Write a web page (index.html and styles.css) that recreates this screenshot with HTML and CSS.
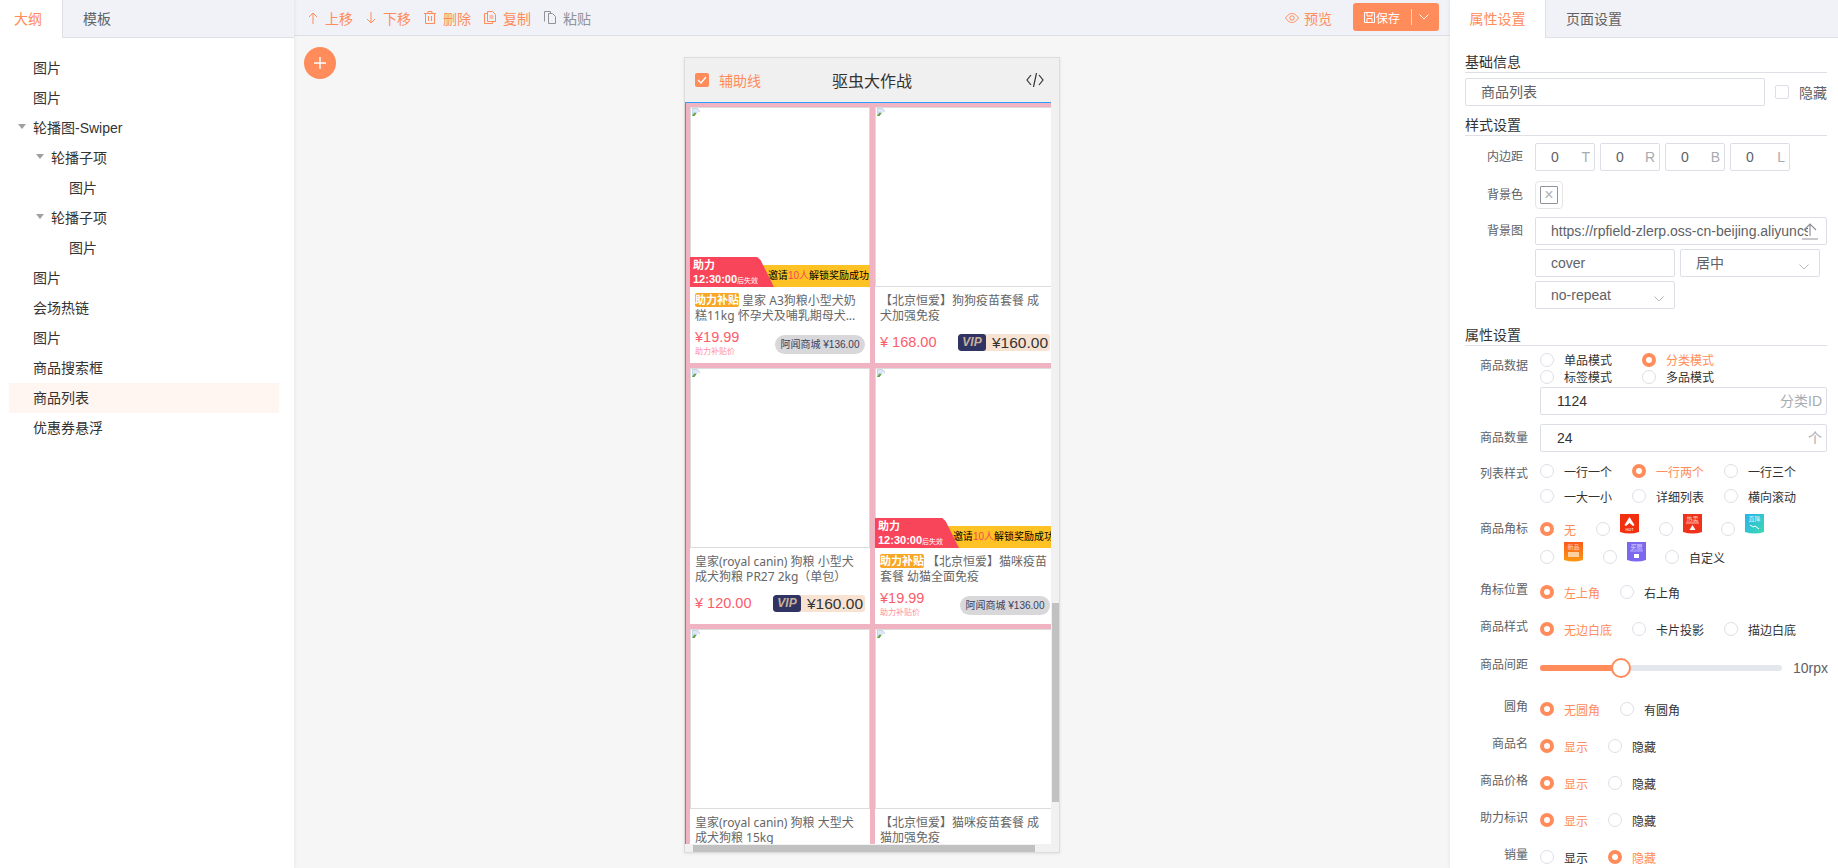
FILE: index.html
```html
<!DOCTYPE html>
<html lang="zh-CN">
<head>
    <meta charset="UTF-8">
    <title>页面编辑</title>
    <link rel="stylesheet" href="styles.css">
</head>
<body>
<svg class="defs" width="0" height="0">
    <symbol id="broken" viewBox="0 0 9 9">
        <path d="M0 0h6l3 3v6H0z" fill="#c7d3e6"/>
        <path d="M1 1h4.500l2.500 2.500V5H1z" fill="#dce8f8"/>
        <path d="M0 9l3-4 2 1-2 3z" fill="#5fa83a"/>
        <path d="M3 9l4-5 2 1v4z" fill="#fff"/>
    </symbol>
    <symbol id="caret" viewBox="0 0 8 5"><path d="M0 0h8L4 5z" fill="#a0a0a0"/></symbol>
    <symbol id="chev" viewBox="0 0 10 6"><path d="M.5.500 5 5 9.500.500" fill="none" stroke="#b4b8c0"/></symbol>
</svg>

<div class="app">
    <aside class="outline">
        <div class="tabs">
            <div class="tab active small">大纲</div>
            <div class="tab small-off">模板</div>
        </div>
        <ul class="tree">
            <li class="node">图片</li>
            <li class="node">图片</li>
            <li class="node"><svg class="caret"><use href="#caret"/></svg>轮播图-Swiper</li>
            <li class="node lv1"><svg class="caret"><use href="#caret"/></svg>轮播子项</li>
            <li class="node lv2">图片</li>
            <li class="node lv1"><svg class="caret"><use href="#caret"/></svg>轮播子项</li>
            <li class="node lv2">图片</li>
            <li class="node">图片</li>
            <li class="node">会场热链</li>
            <li class="node">图片</li>
            <li class="node">商品搜索框</li>
            <li class="node current">商品列表</li>
            <li class="node">优惠券悬浮</li>
        </ul>
    </aside>

    <main class="stage">
        <div class="toolbar">
            <div class="tools">
                <span class="tool">
                    <svg width="10" height="12" viewBox="0 0 10 12"><path d="M5 12V1M1 5l4-4 4 4" fill="none" stroke="currentColor"/></svg>上移
                </span>
                <span class="tool">
                    <svg width="10" height="12" viewBox="0 0 10 12"><path d="M5 0v11M1 7l4 4 4-4" fill="none" stroke="currentColor"/></svg>下移
                </span>
                <span class="tool">
                    <svg width="12" height="13" viewBox="0 0 12 13"><path d="M0 2.500h12M4 2.500V.5h4v2M1.500 2.500v10h9v-10M4.500 5v5M7.500 5v5" fill="none" stroke="currentColor"/></svg>删除
                </span>
                <span class="tool">
                    <svg width="12" height="13" viewBox="0 0 12 13"><path d="M3.500.5h5l3 3v7h-8zM3.500 2.500h-3v10h8v-2M5.500 5h4M5.500 7h4" fill="none" stroke="currentColor"/></svg>复制
                </span>
                <span class="tool off">
                    <svg width="12" height="13" viewBox="0 0 12 13"><path d="M.5 10.500V.5h6v2M4.500 2.500h4l3 3v7h-7z" fill="none" stroke="currentColor"/></svg>粘贴
                </span>
            </div>
            <div class="actions">
                <span class="tool">
                    <svg width="14" height="10" viewBox="0 0 14 10"><path d="M.5 5C3 1.500 5 .5 7 .5s4 1 6.500 4.500C11 8.500 9 9.500 7 9.500S3 8.500.5 5z" fill="none" stroke="currentColor"/><circle cx="7" cy="5" r="2.200" fill="none" stroke="currentColor"/></svg>预览
                </span>
                <div class="save">
                    <svg width="11" height="11" viewBox="0 0 11 11"><path d="M.5.500h10v10H.5zM3 .5v3.500h5V.5M3 10.500V6.500h5v4" fill="none" stroke="#fff"/></svg>
                    <span>保存</span>
                    <i class="save-line"></i>
                    <svg width="10" height="6" viewBox="0 0 10 6"><path d="M.5.500 5 5 9.500.500" fill="none" stroke="#fff"/></svg>
                </div>
            </div>
        </div>

        <div class="canvas">
            <div class="add-btn">
                <svg width="12" height="12" viewBox="0 0 12 12"><path d="M6 0v12M0 6h12" stroke="#fff" stroke-width="1.400"/></svg>
            </div>

            <div class="phone">
                <div class="phone-head">
                    <div class="guide"><i class="check-on"><svg width="10" height="8" viewBox="0 0 10 8"><path d="M1 4l3 3 5-6" fill="none" stroke="#fff" stroke-width="1.300"/></svg></i>辅助线</div>
                    <div class="phone-title">驱虫大作战</div>
                    <svg class="code-icon" width="18" height="14" viewBox="0 0 18 14"><path d="M5 2 1 7l4 5M13 2l4 5-4 5M10.500 0 7.500 14" fill="none" stroke="#333" stroke-width="1.200"/></svg>
                </div>
                <div class="phone-body">
                    <div class="goods-grid">
                        <div class="card">
                            <div class="pic">
                                <svg class="broken"><use href="#broken"/></svg>
                                <div class="assist">
                                    <div class="assist-bar">邀请<em>10人</em>解锁奖励成功</div>
                                    <div class="assist-tag"><b>助力</b><b>12:30:00<small>后失效</small></b></div>
                                </div>
                            </div>
                            <div class="name"><span class="sub-tag">助力补贴</span> 皇家 A3狗粮小型犬奶糕11kg 怀孕犬及哺乳期母犬...</div>
                            <div class="bottom">
                                <div class="price-box"><div class="price">¥19.99</div><div class="price-note">助力补贴价</div></div>
                                <div class="shop-pill">阿闻商城 ¥136.00</div>
                            </div>
                        </div>
                        <div class="card">
                            <div class="pic"><svg class="broken"><use href="#broken"/></svg></div>
                            <div class="name">【北京恒爱】狗狗疫苗套餐 成犬加强免疫</div>
                            <div class="bottom plain">
                                <div class="price">¥ 168.00</div>
                                <div class="vip"><i>VIP</i><span>¥160.00</span></div>
                            </div>
                        </div>
                        <div class="card">
                            <div class="pic"><svg class="broken"><use href="#broken"/></svg></div>
                            <div class="name">皇家(royal canin) 狗粮 小型犬成犬狗粮 PR27 2kg（单包）</div>
                            <div class="bottom plain">
                                <div class="price">¥ 120.00</div>
                                <div class="vip"><i>VIP</i><span>¥160.00</span></div>
                            </div>
                        </div>
                        <div class="card">
                            <div class="pic">
                                <svg class="broken"><use href="#broken"/></svg>
                                <div class="assist">
                                    <div class="assist-bar">邀请<em>10人</em>解锁奖励成功</div>
                                    <div class="assist-tag"><b>助力</b><b>12:30:00<small>后失效</small></b></div>
                                </div>
                            </div>
                            <div class="name"><span class="sub-tag">助力补贴</span> 【北京恒爱】猫咪疫苗套餐 幼猫全面免疫</div>
                            <div class="bottom">
                                <div class="price-box"><div class="price">¥19.99</div><div class="price-note">助力补贴价</div></div>
                                <div class="shop-pill">阿闻商城 ¥136.00</div>
                            </div>
                        </div>
                        <div class="card">
                            <div class="pic"><svg class="broken"><use href="#broken"/></svg></div>
                            <div class="name">皇家(royal canin) 狗粮 大型犬成犬狗粮 15kg</div>
                        </div>
                        <div class="card">
                            <div class="pic"><svg class="broken"><use href="#broken"/></svg></div>
                            <div class="name">【北京恒爱】猫咪疫苗套餐 成猫加强免疫</div>
                        </div>
                    </div>
                    <div class="bar-v"><i></i></div>
                    <div class="bar-h"><i></i></div>
                </div>
            </div>
        </div>
    </main>

    <aside class="props">
        <div class="tabs">
            <div class="tab active wide">属性设置</div>
            <div class="tab wide-off">页面设置</div>
        </div>
        <div class="form">
            <div class="sec-title first">基础信息</div>
            <div class="name-row">
                <div class="field name-field">商品列表</div>
                <i class="check-off"></i><span class="hide-text">隐藏</span>
            </div>

            <div class="sec-title mt10">样式设置</div>
            <div class="row pad-row">
                <label>内边距</label>
                <div class="field pad"><span>0</span><u>T</u></div>
                <div class="field pad"><span>0</span><u>R</u></div>
                <div class="field pad"><span>0</span><u>B</u></div>
                <div class="field pad"><span>0</span><u>L</u></div>
            </div>
            <div class="row color-row">
                <label>背景色</label>
                <div class="color-box"><i>×</i></div>
            </div>
            <div class="row image-row">
                <label>背景图</label>
                <div class="field url">
                    <span>https://rpfield-zlerp.oss-cn-beijing.aliyuncs.com/</span>
                    <svg width="18" height="18" viewBox="0 0 18 18"><path d="M1 17h16M9 14V2M3 8l6-6 6 6" fill="none" stroke="#909399" stroke-width="1.200"/></svg>
                </div>
            </div>
            <div class="row sel-row">
                <div class="field sel">cover</div>
                <div class="field sel">居中<svg class="chev"><use href="#chev"/></svg></div>
            </div>
            <div class="row sel-row">
                <div class="field sel">no-repeat<svg class="chev"><use href="#chev"/></svg></div>
            </div>

            <div class="sec-title mt17">属性设置</div>
            <div class="row opts data-row">
                <label>商品数据</label>
                <div class="radios tight">
                    <div class="line">
                        <span class="radio w102">单品模式</span>
                        <span class="radio on">分类模式</span>
                    </div>
                    <div class="line">
                        <span class="radio w102">标签模式</span>
                        <span class="radio">多品模式</span>
                    </div>
                </div>
            </div>
            <div class="row input-row id-row">
                <div class="field wide-input"><span>1124</span><u>分类ID</u></div>
            </div>
            <div class="row input-row count-row">
                <label>商品数量</label>
                <div class="field wide-input"><span>24</span><u>个</u></div>
            </div>
            <div class="row opts list-row">
                <label>列表样式</label>
                <div class="radios">
                    <div class="line"><span class="radio w92">一行一个</span><span class="radio w92 on">一行两个</span><span class="radio">一行三个</span></div>
                    <div class="line"><span class="radio w92">一大一小</span><span class="radio w92">详细列表</span><span class="radio">横向滚动</span></div>
                </div>
            </div>
            <div class="row opts corner-row">
                <label>商品角标</label>
                <div class="radios">
                    <div class="line tall">
                        <span class="radio on w56">无</span>
                        <span class="radio w63"><svg class="corner" viewBox="0 0 19 20"><path d="M0 0h19v18q-9.500 3-19 0z" fill="#f2300f"/><path d="M9.500 3l5 8-1.500 1-3.500-3-3.500 3-1.500-1z" fill="#fff"/><text x="9.500" y="17" font-size="4" fill="#fff" text-anchor="middle">HOT</text></svg></span>
                        <span class="radio w62"><svg class="corner" viewBox="0 0 19 20"><path d="M0 0h19v18q-9.500 3-19 0z" fill="#f0321a"/><text x="9.500" y="7" font-size="6" fill="#fbd0c0" text-anchor="middle">热卖</text><path d="M3 9h13" stroke="#fbb"/><path d="M9.500 11l3 5h-6z" fill="#fff"/></svg></span>
                        <span class="radio"><svg class="corner" viewBox="0 0 19 20"><defs><linearGradient id="gz" x1="0" y1="0" x2="1" y2="1"><stop offset="0" stop-color="#25b4f0"/><stop offset="1" stop-color="#3fd8b0"/></linearGradient></defs><path d="M0 0h19v18q-9.500 3-19 0z" fill="url(#gz)"/><text x="9.500" y="7" font-size="6" fill="#d8f4ff" text-anchor="middle">直降</text><path d="M5 11l3 2 2-1 4 3" fill="none" stroke="#fff"/></svg></span>
                    </div>
                    <div class="line tall">
                        <span class="radio w63"><svg class="corner" viewBox="0 0 19 20"><defs><linearGradient id="gx" x1="0" y1="0" x2="0" y2="1"><stop offset="0" stop-color="#fa5a1e"/><stop offset="1" stop-color="#fb9a12"/></linearGradient></defs><path d="M0 0h19v18q-9.500 3-19 0z" fill="url(#gx)"/><text x="9.500" y="7" font-size="6" fill="#ffd8c0" text-anchor="middle">新品</text><rect x="4" y="10" width="11" height="5" fill="#ffd0a0"/></svg></span>
                        <span class="radio w62"><svg class="corner" viewBox="0 0 19 20"><path d="M0 0h19v18q-9.500 3-19 0z" fill="#7b68ee"/><text x="9.500" y="7" font-size="6" fill="#dcd8ff" text-anchor="middle">买赠</text><path d="M3 9h13" stroke="#b8b0ff"/><rect x="7" y="12" width="5" height="4" fill="#fff"/></svg></span>
                        <span class="radio">自定义</span>
                    </div>
                </div>
            </div>
            <div class="row opts pos-row">
                <label>角标位置</label>
                <div class="radios"><div class="line"><span class="radio on w80">左上角</span><span class="radio">右上角</span></div></div>
            </div>
            <div class="row opts mt13">
                <label>商品样式</label>
                <div class="radios"><div class="line"><span class="radio w92 on">无边白底</span><span class="radio w92">卡片投影</span><span class="radio">描边白底</span></div></div>
            </div>
            <div class="row opts slider-row">
                <label>商品间距</label>
                <div class="slider"><div class="slider-track"><div class="slider-fill"></div><div class="slider-dot"></div></div></div>
                <span class="slider-val">10rpx</span>
            </div>
            <div class="row opts mt17">
                <label>圆角</label>
                <div class="radios"><div class="line"><span class="radio on w80">无圆角</span><span class="radio">有圆角</span></div></div>
            </div>
            <div class="row opts mt13">
                <label>商品名</label>
                <div class="radios"><div class="line"><span class="radio on w68">显示</span><span class="radio">隐藏</span></div></div>
            </div>
            <div class="row opts mt13">
                <label>商品价格</label>
                <div class="radios"><div class="line"><span class="radio on w68">显示</span><span class="radio">隐藏</span></div></div>
            </div>
            <div class="row opts mt13">
                <label>助力标识</label>
                <div class="radios"><div class="line"><span class="radio on w68">显示</span><span class="radio">隐藏</span></div></div>
            </div>
            <div class="row opts mt13">
                <label>销量</label>
                <div class="radios"><div class="line"><span class="radio w68">显示</span><span class="radio on">隐藏</span></div></div>
            </div>
        </div>
    </aside>
</div>
</body>
</html>
```

FILE: styles.css
```css
*, *::before {
    box-sizing: border-box;
}
html, body {
    margin: 0;
    padding: 0;
    height: 868px;
    overflow: hidden;
}
body {
    font-family: "Liberation Sans", "Noto Sans CJK SC", sans-serif;
    font-size: 14px;
    color: #333;
    background: #f6f6f6;
}
.defs {
    position: absolute;
}
.app {
    display: flex;
    height: 868px;
}

/* left panel */
.outline {
    width: 294px;
    flex: none;
    background: #fff;
    box-shadow: 1px 0 3px rgba(0, 0, 0, 0.06);
    z-index: 2;
}
.tabs {
    display: flex;
    height: 38px;
    background: #f1f2f7;
    border-bottom: 1px solid #dfe0e6;
}
.tab {
    height: 37px;
    line-height: 38px;
    color: #606266;
}
.tab.active {
    background: #fff;
    color: #ff8c5a;
    height: 38px;
}
.small {
    width: 63px;
    padding-left: 14px;
    border-right: 1px solid #dfe0e6;
}
.small-off {
    padding-left: 20px;
}
.tree {
    list-style: none;
    margin: 0;
    padding: 15px 15px 0 9px;
}
.node {
    position: relative;
    height: 30px;
    line-height: 31px;
    padding-left: 24px;
    color: #333;
}
.node.lv1 {
    padding-left: 42px;
}
.node.lv2 {
    padding-left: 60px;
}
.node.current {
    background: #fff6f2;
}
.caret {
    position: absolute;
    width: 8px;
    height: 5px;
    left: 9px;
    top: 11px;
}
.lv1 .caret {
    left: 27px;
}

/* middle */
.stage {
    flex: 1;
    min-width: 0;
    display: flex;
    flex-direction: column;
}
.toolbar {
    height: 36px;
    flex: none;
    display: flex;
    justify-content: space-between;
    background: #f1f2f7;
    border-bottom: 1px solid #dfe0e6;
    padding: 0 11px 0 14px;
}
.tools, .actions {
    display: flex;
    align-items: center;
}
.tool {
    display: flex;
    align-items: center;
    gap: 7px;
    color: #ff8c5a;
    margin-right: 13px;
    font-size: 14px;
}
.tool.off {
    color: #909399;
}
.actions .tool {
    gap: 5px;
    margin-right: 21px;
}
.save {
    width: 86px;
    height: 28px;
    margin-top: -1px;
    background: #ff8c5a;
    border-radius: 3px;
    color: #fff;
    font-size: 12px;
    display: flex;
    align-items: center;
    padding-left: 11px;
}
.save span {
    margin-left: 1px;
}
.save-line {
    width: 1px;
    height: 16px;
    margin: 0 7px 0 11px;
    background: rgba(255, 255, 255, 0.6);
}
.canvas {
    position: relative;
    flex: 1;
    min-height: 0;
    padding-top: 21px;
}
.add-btn {
    position: absolute;
    left: 10px;
    top: 11px;
    width: 32px;
    height: 32px;
    border-radius: 50%;
    background: #ff8c5a;
    display: flex;
    align-items: center;
    justify-content: center;
}
.phone {
    width: 376px;
    height: 796px;
    margin: 0 auto;
    background: #f0f0f0;
    border: 1px solid #dcdcdc;
    box-shadow: 0 1px 3px rgba(0, 0, 0, 0.08);
    display: flex;
    flex-direction: column;
}
.phone-head {
    height: 44px;
    flex: none;
    display: grid;
    grid-template-columns: 1fr auto 1fr;
    align-items: center;
    padding: 0 15px 0 10px;
}
.guide {
    display: flex;
    align-items: center;
    gap: 10px;
    color: #ff8c5a;
}
.check-on {
    width: 14px;
    height: 14px;
    border-radius: 2px;
    background: #ff8c5a;
    display: flex;
    align-items: center;
    justify-content: center;
}
.phone-title {
    font-size: 16px;
    margin-left: 5px;
    color: #333;
}
.code-icon {
    justify-self: end;
}
.phone-body {
    position: relative;
    flex: 1;
    min-height: 0;
    overflow: hidden;
    background: #f0f0f0;
}
.goods-grid {
    width: 366px;
    height: 742px;
    overflow: hidden;
    display: grid;
    grid-template-columns: 180px 180px;
    grid-auto-rows: 256px;
    gap: 5px;
    padding: 4px 0 0 4px;
    background: #f0b3c2;
    border-top: 1px solid #2e9bff;
    border-left: 1px solid #2e9bff;
}
.card {
    background: #fff;
    position: relative;
    width: 180px;
}
.pic {
    position: relative;
    height: 180px;
    border: 1px solid #dcdcdc;
    background: #fff;
}
.broken {
    position: absolute;
    left: 1px;
    top: 0;
    width: 8px;
    height: 8px;
}
.assist {
    position: absolute;
    left: -1px;
    right: -1px;
    bottom: -1px;
    height: 30px;
}
.assist-bar {
    position: absolute;
    left: 60px;
    right: 0;
    bottom: 0;
    height: 22px;
    line-height: 22px;
    background: #fec225;
    color: #000;
    font-size: 10px;
    text-align: right;
    white-space: nowrap;
    padding-right: 1px;
    overflow: hidden;
}
.assist-bar em {
    font-style: normal;
    color: #f9455a;
}
.assist-tag {
    position: absolute;
    left: 0;
    top: 0;
    width: 84px;
    height: 30px;
    background: #f9455a;
    clip-path: polygon(0 0, 80% 0, 84% 10%, 100% 100%, 0 100%);
    color: #fff;
    padding: 1px 0 0 3px;
    font-size: 11px;
    line-height: 14px;
}
.assist-tag b {
    display: block;
    white-space: nowrap;
}
.assist-tag small {
    font-size: 7px;
    font-weight: normal;
}
.name {
    margin: 6px 5px 0;
    height: 30px;
    font-family: "Noto Sans", "Noto Sans CJK SC", sans-serif;
    font-size: 12px;
    line-height: 15px;
    color: #666;
    overflow: hidden;
}
.sub-tag {
    display: inline-block;
    background: #f8a623;
    color: #fff;
    font-size: 11px;
    font-weight: bold;
    height: 14px;
    line-height: 14px;
    width: 44px;
    text-align: center;
    border-radius: 2px;
    vertical-align: top;
}
.bottom {
    margin: 6px 5px 0;
    display: flex;
    justify-content: space-between;
    align-items: flex-start;
}
.bottom.plain {
    margin-top: 11px;
    align-items: center;
}
.price {
    color: #fa5c6b;
    font-size: 14.500px;
    line-height: 17px;
}
.price-note {
    color: #ff8fa0;
    font-size: 8px;
    line-height: 10px;
    margin-top: 1px;
}
.shop-pill {
    margin-top: 6px;
    height: 19px;
    line-height: 19px;
    width: 90px;
    text-align: center;
    border-radius: 10px;
    background: #d8d8da;
    color: #3a4060;
    font-size: 10px;
    white-space: nowrap;
}
.vip {
    display: flex;
    width: 92px;
    height: 17px;
    background: #f8e3d3;
    border-radius: 3px;
    overflow: hidden;
    font-size: 15.500px;
    line-height: 17px;
    color: #333;
}
.vip i {
    width: 28px;
    flex: none;
    background: #2f3463;
    color: #c9b09a;
    font-weight: bold;
    font-size: 12px;
    text-align: center;
    border-radius: 3px;
}
.vip span {
    flex: 1;
    text-align: right;
    padding-right: 2px;
    white-space: nowrap;
}
.bar-v {
    position: absolute;
    right: 0;
    top: 0;
    bottom: 8px;
    width: 8px;
    background: #f1f1f1;
}
.bar-v i {
    position: absolute;
    left: 1px;
    right: 0;
    top: 501px;
    height: 199px;
    background: #c1c1c1;
}
.bar-h {
    position: absolute;
    left: 0;
    right: 0;
    bottom: 0;
    height: 8px;
    background: #f1f1f1;
}
.bar-h i {
    position: absolute;
    left: 8px;
    top: 1px;
    width: 342px;
    height: 7px;
    background: #c1c1c1;
}

/* right panel */
.props {
    width: 388px;
    flex: none;
    background: #fff;
    box-shadow: -1px 0 3px rgba(0, 0, 0, 0.06);
    z-index: 2;
    overflow: hidden;
}
.wide {
    width: 96px;
    text-align: center;
    border-right: 1px solid #dfe0e6;
}
.wide-off {
    padding-left: 20px;
}
.form {
    padding: 0 11px 0 15px;
}
.sec-title {
    height: 20px;
    line-height: 19px;
    border-bottom: 1px solid #dfe0e6;
    color: #333;
}
.sec-title.first {
    margin-top: 15px;
}
.name-row {
    display: flex;
    align-items: center;
    margin-top: 5px;
    height: 28px;
}
.field {
    height: 28px;
    line-height: 26px;
    border: 1px solid #dcdfe6;
    border-radius: 2px;
    background: #fff;
    color: #606266;
}
.name-field {
    width: 300px;
    padding-left: 15px;
    color: #606266;
}
.check-off {
    width: 14px;
    height: 14px;
    border: 1px solid #dcdfe6;
    border-radius: 2px;
    margin-left: 10px;
}
.hide-text {
    margin-left: 10px;
    color: #606266;
}
.row {
    display: flex;
    margin-top: 8px;
}
.row label {
    width: 58px;
    flex: none;
    margin-right: 12px;
    text-align: right;
    font-size: 12px;
    color: #606266;
    line-height: 28px;
}
.pad-row {
    margin-top: 7px;
    gap: 5px;
}
.pad-row label {
    margin-right: 7px;
}
.pad {
    width: 60px;
    display: flex;
    justify-content: space-between;
    padding: 0 4px 0 15px;
}
.field u {
    text-decoration: none;
    color: #a8abb2;
}
.color-row {
    margin-top: 10px;
}
.color-box {
    width: 28px;
    height: 28px;
    border: 1px solid #e6e6e6;
    border-radius: 4px;
    padding: 4px;
}
.color-box i {
    display: block;
    width: 18px;
    height: 18px;
    border: 1px solid #909399;
    border-radius: 1px;
    text-align: center;
    font-style: normal;
    font-size: 16px;
    line-height: 15px;
    color: #b0b3b8;
}
.url {
    flex: 1;
    position: relative;
    padding-left: 15px;
    overflow: hidden;
    white-space: nowrap;
}
.url span {
    display: block;
    width: 257px;
    overflow: hidden;
}
.url svg {
    position: absolute;
    right: 7px;
    top: 4px;
}
.sel-row {
    margin-top: 4px;
    padding-left: 70px;
    gap: 5px;
}
.sel {
    position: relative;
    width: 140px;
    padding-left: 15px;
}
.chev {
    position: absolute;
    right: 10px;
    top: 14px;
    width: 10px;
    height: 6px;
}
.opts label {
    width: 63px;
    line-height: 14px;
    padding-top: 3px;
}
.radios {
    flex: 1;
    min-width: 0;
}
.line {
    display: flex;
    align-items: center;
    height: 24px;
    font-size: 12px;
}
.radios.tight .line {
    height: 17px;
}
.data-row {
    margin-top: 5px;
}
.opts.data-row label {
    padding-top: 8px;
}
.list-row {
    margin-top: 7px;
}
.opts.list-row label {
    padding-top: 8px;
}
.list-row .line + .line {
    margin-top: 1px;
}
.line.tall {
    height: 28px;
}
.corner-row {
    margin-top: 7px;
}
.opts.corner-row label {
    padding-top: 7px;
}
.pos-row {
    margin-top: 9px;
}
.radio {
    display: flex;
    align-items: center;
    color: #333;
    white-space: nowrap;
}
.radio::before {
    content: "";
    flex: none;
    width: 14px;
    height: 14px;
    margin-right: 10px;
    border: 1px solid #dcdfe6;
    border-radius: 50%;
    background: #fff;
}
.radio.on {
    color: #ff8c5a;
}
.radio.on::before {
    border: 4.500px solid #ff8c5a;
}
.w102 {
    width: 102px;
}
.w92 {
    width: 92px;
}
.w56 {
    width: 56px;
}
.w63 {
    width: 63px;
}
.w62 {
    width: 62px;
}
.w80 {
    width: 80px;
}
.w68 {
    width: 68px;
}
.corner {
    width: 19px;
    height: 20px;
    margin-bottom: 10px;
    font-family: "Noto Sans CJK SC", sans-serif;
}
.id-row {
    margin-top: 2px;
    padding-left: 75px;
}
.input-row label {
    width: 63px;
}
.count-row {
    margin-top: 9px;
}
.wide-input {
    flex: 1;
    display: flex;
    justify-content: space-between;
    padding: 0 4px 0 16px;
    color: #333;
}
.slider-row {
    margin-top: 15px;
    height: 24px;
    align-items: center;
}
.opts.slider-row label {
    padding-top: 0;
    margin-top: -6px;
}
.slider {
    width: 242px;
    flex: none;
}
.slider-track {
    position: relative;
    height: 6px;
    border-radius: 3px;
    background: #e4e7ed;
}
.slider-fill {
    width: 81px;
    height: 6px;
    border-radius: 3px;
    background: #ff8c5a;
}
.slider-dot {
    position: absolute;
    left: 71px;
    top: -7px;
    width: 20px;
    height: 20px;
    border: 2px solid #ff8c5a;
    border-radius: 50%;
    background: #fff;
}
.slider-val {
    margin-left: 11px;
    font-size: 14px;
    color: #606266;
}

/* spacing helpers, after .row so they win */
.mt10 {
    margin-top: 10px;
}
.mt13 {
    margin-top: 13px;
}
.mt17 {
    margin-top: 17px;
}
```
